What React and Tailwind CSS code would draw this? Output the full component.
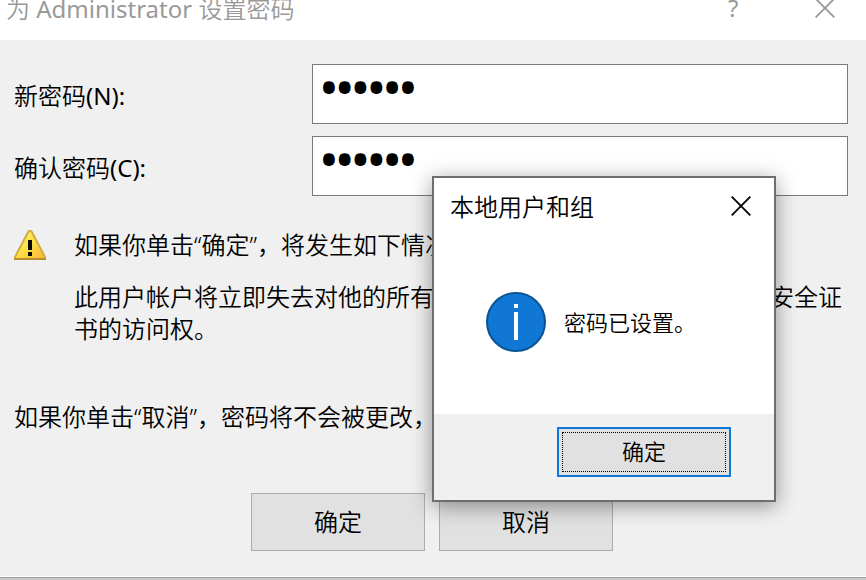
import React from "react";

function CloseIcon({ className }) {
  return (
    <svg viewBox="0 0 20 20" className={className} fill="none" stroke="currentColor" strokeWidth="1.8" aria-hidden="true">
      <path d="M0.7 0.7 L19.3 19.3 M19.3 0.7 L0.7 19.3" />
    </svg>
  );
}

function WarningIcon() {
  return (
    <svg viewBox="0 0 32 30" className="h-[30px] w-8 shrink-0" aria-hidden="true">
      <defs>
        <linearGradient id="warn" x1="0" y1="0" x2="1" y2="1">
          <stop offset="0" stopColor="#fff27a" />
          <stop offset="0.5" stopColor="#fde047" />
          <stop offset="1" stopColor="#f9b233" />
        </linearGradient>
      </defs>
      <path
        d="M14.4 1.6Q16 -0.4 17.6 1.6L30.8 26.6Q31.6 29 29.4 29H2.6Q0.4 29 1.2 26.6Z"
        fill="url(#warn)"
        stroke="#d0ae42"
        strokeWidth="2"
      />
      <path d="M0 28h32v2H0z" fill="#b8902c" />
      <path d="M14 10h4v10h-4zM14 22h4v4h-4z" fill="#0a0a0a" />
    </svg>
  );
}

function InfoIcon() {
  return (
    <svg viewBox="0 0 60 60" className="h-[60px] w-[60px] shrink-0" aria-hidden="true">
      <circle cx="30" cy="30" r="29" fill="#1078d4" stroke="#0b5394" strokeWidth="2" />
      <path d="M28 12h4v4h-4zM28 20h4v28h-4z" fill="#fff" />
    </svg>
  );
}

function PasswordRow({ id, label, accessKey, name }) {
  return (
    <div className="flex">
      <label htmlFor={id} className="w-[298px] shrink-0 pt-4 leading-8">
        {label}
        <span className="font-normal">({accessKey}):</span>
      </label>
      <input
        id={id}
        name={name}
        type="password"
        defaultValue="123456"
        className="h-[60px] min-w-0 flex-1 border border-[#7a7a7a] bg-white px-2 pb-4 font-['Noto_Sans',sans-serif] text-[42px] leading-none font-bold text-black outline-none"
      />
    </div>
  );
}

function FormButton({ children }) {
  return (
    <button type="button" className="h-[58px] w-[174px] border border-[#adadad] bg-[#e1e1e1]">
      {children}
    </button>
  );
}

function MessageDialog() {
  return (
    <section
      role="dialog"
      aria-labelledby="message-title"
      className="absolute top-[176px] left-[432px] flex h-[326px] w-[344px] flex-col border-2 border-[#6e6e6e] bg-white shadow-[0_4px_20px_rgba(0,0,0,0.4)]"
    >
      <header className="flex items-start justify-between pt-[13px] pr-[23px] pl-4">
        <h2 id="message-title" className="leading-8">
          本地用户和组
        </h2>
        <button type="button" aria-label="关闭" className="pt-[5px]">
          <CloseIcon className="h-5 w-5" />
        </button>
      </header>
      <div className="flex flex-1 items-center gap-[18px] pt-[7px] pl-[52px]">
        <InfoIcon />
        <p className="text-[22px] leading-8">密码已设置。</p>
      </div>
      <footer className="flex h-[86px] justify-end bg-[#f0f0f0] pt-[13px] pr-[43px]">
        <button type="button" className="h-[50px] w-[174px] border-2 border-[#0f78d7] bg-[#e1e1e1] p-[3px] text-[22px]">
          <span className="flex h-full items-center justify-center border border-dotted border-black">确定</span>
        </button>
      </footer>
    </section>
  );
}

export default function App() {
  return (
    <div className="relative flex min-h-screen flex-col overflow-hidden bg-[#c8c8c8] font-['Noto_Sans','Noto_Sans_CJK_SC',sans-serif] text-2xl font-[350] text-black">
      <header className="flex h-10 items-start bg-white pr-[31px] pl-[6px] text-[#999999]">
        <h1 className="flex-1 leading-[18px]">
          为 <span className="font-normal">Administrator</span> 设置密码
        </h1>
        <button type="button" aria-label="帮助" className="w-[87px] text-left leading-4 font-normal">
          ?
        </button>
        <button type="button" aria-label="关闭" className="-mt-[2px]">
          <CloseIcon className="h-5 w-5" />
        </button>
      </header>
      <main className="flex-1 border-b border-white bg-[#f0f0f0] pt-6 pr-[18px] pb-[25px] pl-[14px]">
        <form className="flex flex-col gap-3">
          <PasswordRow id="new-password" name="new" label="新密码" accessKey="N" />
          <PasswordRow id="confirm-password" name="confirm" label="确认密码" accessKey="C" />
        </form>
        <div className="mt-[33px] flex gap-7">
          <div className="pt-px">
            <WarningIcon />
          </div>
          <div className="leading-8">
            <p>如果你单击“确定”，将发生如下情况:</p>
            <p className="mt-5">此用户帐户将立即失去对他的所有加密的文件，保存的密码和个人安全证书的访问权。</p>
          </div>
        </div>
        <p className="mt-14 leading-8">如果你单击“取消”，密码将不会被更改，并且将不会丢失数据。</p>
        <div className="mt-[60px] flex justify-center gap-[14px] pl-[2px]">
          <FormButton>确定</FormButton>
          <FormButton>取消</FormButton>
        </div>
      </main>
      <div className="h-[3px] border-t border-[#a0a0a0]" />
      <MessageDialog />
    </div>
  );
}
